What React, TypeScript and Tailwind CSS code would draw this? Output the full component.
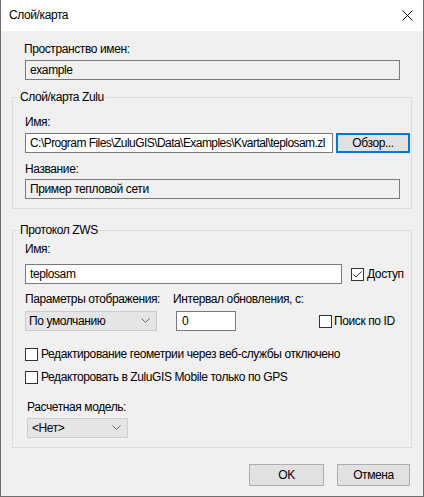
import React from "react";

const font = { fontFamily: '"Liberation Sans", "Noto Sans", sans-serif' };

function Check({ checked }: { checked?: boolean }) {
  return (
    <span className="w-[13px] h-[13px] border border-[#333333] bg-white flex items-center justify-center shrink-0">
      {checked && (
        <svg width="11" height="11" viewBox="0 0 11 11">
          <path d="M1.5 5.5 L4 8 L9.5 2.5" fill="none" stroke="#333333" strokeWidth="1" />
        </svg>
      )}
    </span>
  );
}

function Chevron() {
  return (
    <svg width="9" height="6" viewBox="0 0 9 6">
      <path d="M0.5 0.5 L4.5 4.5 L8.5 0.5" fill="none" stroke="#606060" strokeWidth="1" />
    </svg>
  );
}

export default function App() {
  return (
    <div
      className="w-[424px] h-[497px] flex flex-col border-x border-b border-[#6f6f6f] bg-[#f0f0f0] text-[12px] text-black leading-[15px] tracking-[-0.4px]"
      style={font}
    >
      <div className="h-[31px] bg-white flex items-center justify-between pl-[8px] pr-[10px] shrink-0">
        <span className="text-[12px]">Слой/карта</span>
        <svg width="11" height="11" viewBox="0 0 11 11">
          <path d="M0.5 0.5 L10.5 10.5 M10.5 0.5 L0.5 10.5" stroke="#111" strokeWidth="1" />
        </svg>
      </div>

      <div className="flex flex-col">
        <div className="pl-[23px] pt-[11px]">Пространство имен:</div>
        <div className="ml-[24px] mt-[3px] w-[375px] h-[20px] border border-[#7a7a7a] bg-[#f0f0f0] flex items-center pl-[4px]">
          example
        </div>

        <fieldset className="ml-[11px] mt-[10px] w-[400px] h-[119px] border border-[#dcdcdc] px-0 pb-0">
          <legend className="ml-[6px] px-[1px]">Слой/карта Zulu</legend>
          <div className="pl-[12px]">
            <div className="mt-[10px]">Имя:</div>
            <div className="mt-[3px] flex items-center">
              <div className="w-[308px] h-[20px] border border-[#7a7a7a] bg-white flex items-center pl-[4px] whitespace-nowrap overflow-hidden tracking-[-0.55px]">
                C:\Program Files\ZuluGIS\Data\Examples\Kvartal\teplosam.zl
              </div>
              <div className="ml-[3px] w-[74px] h-[20px] border-2 border-[#0078d7] bg-[#e1e1e1] flex items-center justify-center">
                Обзор...
              </div>
            </div>
            <div className="mt-[9px]">Название:</div>
            <div className="mt-[2px] w-[375px] h-[20px] border border-[#7a7a7a] bg-[#f0f0f0] flex items-center pl-[4px]">
              Пример тепловой сети
            </div>
          </div>
        </fieldset>

        <fieldset className="ml-[11px] mt-[14px] w-[400px] h-[225px] border border-[#dcdcdc] px-0 pb-0">
          <legend className="ml-[6px] px-[1px]">Протокол ZWS</legend>
          <div className="pl-[12px]">
            <div className="mt-[4px]">Имя:</div>
            <div className="mt-[7px] flex items-center">
              <div className="w-[317px] h-[20px] border border-[#7a7a7a] bg-white flex items-center pl-[4px]">
                teplosam
              </div>
              <label className="ml-[9px] flex items-center gap-[3px]">
                <Check checked />
                <span>Доступ</span>
              </label>
            </div>
            <div className="mt-[8px] flex">
              <div className="w-[148px]">Параметры отображения:</div>
              <div>Интервал обновления, с:</div>
            </div>
            <div className="mt-[4px] flex items-center">
              <div className="w-[132px] h-[20px] border border-[#cccccc] bg-[#e5e5e5] flex items-center justify-between pl-[3px] pr-[6px]">
                <span>По умолчанию</span>
                <Chevron />
              </div>
              <div className="ml-[19px] w-[60px] h-[20px] border border-[#7a7a7a] bg-white flex items-center pl-[5px]">
                0
              </div>
              <label className="ml-[83px] flex items-center gap-[2px]">
                <Check />
                <span>Поиск по ID</span>
              </label>
            </div>
            <label className="mt-[16px] flex items-center gap-[3px]">
              <Check />
              <span>Редактирование геометрии через веб-службы отключено</span>
            </label>
            <label className="mt-[8px] flex items-center gap-[3px]">
              <Check />
              <span>Редакторовать в ZuluGIS Mobile только по GPS</span>
            </label>
            <div className="mt-[15px] pl-[2px]">Расчетная модель:</div>
            <div className="mt-[3px] ml-[2px] w-[101px] h-[20px] border border-[#cccccc] bg-[#e5e5e5] flex items-center justify-between pl-[4px] pr-[6px]">
              <span>&lt;Нет&gt;</span>
              <Chevron />
            </div>
          </div>
        </fieldset>

        <div className="mt-[16px] flex justify-end gap-[13px] pr-[13px]">
          <div className="w-[75px] h-[22px] border border-[#adadad] bg-[#e1e1e1] flex items-center justify-center">
            OK
          </div>
          <div className="w-[73px] h-[22px] border border-[#adadad] bg-[#e1e1e1] flex items-center justify-center">
            Отмена
          </div>
        </div>
      </div>
    </div>
  );
}
